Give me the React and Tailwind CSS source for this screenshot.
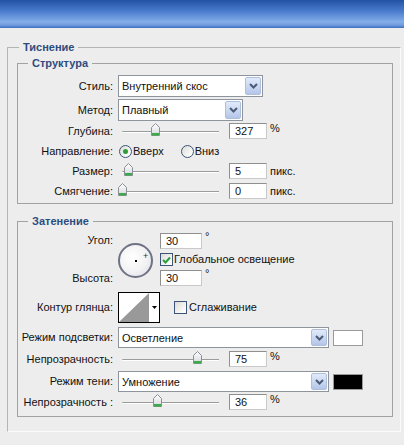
import React from 'react';

const Label = ({ children }) => (
    <span className="w-[95px] shrink-0 text-right whitespace-nowrap">{children}</span>
);

const Chevron = () => (
    <svg width="9" height="6" viewBox="0 0 9 6">
        <polyline points="1,1 4.5,4.5 8,1" fill="none" stroke="#4b5a76" strokeWidth="2" />
    </svg>
);

const Select = ({ value, width }) => (
    <div className={`ml-[5px] flex items-stretch h-full border border-[#8d949c] bg-white ${width}`}>
        <span className="flex-1 flex items-center pl-[3px] pt-[1px]">{value}</span>
        <span className="m-[1px] w-[16px] flex items-center justify-center rounded-[2px] border border-[#aebfdc] bg-[linear-gradient(180deg,#e2eafa_0%,#c6d5f0_60%,#b3c5e8_100%)]">
            <Chevron />
        </span>
    </div>
);

const Thumb = ({ left }) => (
    <svg className="absolute top-0" style={{ left }} width="9" height="13" viewBox="0 0 9 13">
        <defs>
            <linearGradient id="tg" x1="0" y1="0" x2="0" y2="1">
                <stop offset="0" stopColor="#ffffff" />
                <stop offset="1" stopColor="#d4d8dc" />
            </linearGradient>
        </defs>
        <path d="M0.5 4.5 L4.5 0.5 L8.5 4.5 L8.5 12.5 L0.5 12.5 Z" fill="url(#tg)" stroke="#8b9096" />
        <rect x="1" y="10" width="7" height="2.5" fill="#3caa4a" />
    </svg>
);

const Slider = ({ pos }) => (
    <div className="relative ml-[5px] w-[106px] h-[16px] shrink-0">
        <div className="absolute left-[4px] top-[8px] w-[97px] h-[2px] border-t border-[#9b9b9b] bg-white rounded-l-full" />
        <Thumb left={pos} />
    </div>
);

const NumBox = ({ value, width = 'w-[38px]' }) => (
    <div className={`h-[16px] ${width} shrink-0 border border-[#8f8f8f] border-b-[#c9c9c9] border-r-[#c9c9c9] bg-white pl-[5px] flex items-center`}>
        {value}
    </div>
);

const SliderRow = ({ label, pos, value, unit }) => (
    <div className="flex items-center h-[20px]">
        <Label>{label}</Label>
        <Slider pos={pos} />
        <span className="ml-[5px]"><NumBox value={value} /></span>
        <span className={`ml-[3px] ${unit === '%' ? '-mt-[5px]' : ''}`}>{unit}</span>
    </div>
);

const Radio = ({ checked }) => (
    <span className="w-[13px] h-[13px] rounded-full border border-[#3c5478] bg-[linear-gradient(135deg,#dcdcd6_0%,#ffffff_90%)] flex items-center justify-center shrink-0">
        {checked && <span className="w-[5px] h-[5px] rounded-full bg-[#2e9e3c]" />}
    </span>
);

const Checkbox = ({ checked }) => (
    <span className="w-[13px] h-[13px] border border-[#3c5478] bg-[linear-gradient(135deg,#dcdcd6_0%,#ffffff_90%)] flex items-center justify-center shrink-0">
        {checked && (
            <svg width="9" height="8" viewBox="0 0 9 8">
                <polyline points="1,4 3.5,6.5 8,1.5" fill="none" stroke="#27a13a" strokeWidth="2" />
            </svg>
        )}
    </span>
);

const Group = ({ title, className, children }) => (
    <fieldset className={`border border-[#a2a2a2] ${className}`}>
        <legend className="ml-[10px] px-[4px] font-bold text-[#2d4c7e] leading-[14px]">{title}</legend>
        {children}
    </fieldset>
);

export default function App() {
    const structureSliders = [
        { label: 'Размер:', pos: 6, value: '5', unit: 'пикс.' },
        { label: 'Смягчение:', pos: 0, value: '0', unit: 'пикс.' },
    ];

    return (
        <div className="w-[404px] h-[445px] overflow-hidden bg-[#ededed] text-[11px] leading-[13px] text-[#111] font-['Liberation_Sans',Arial,sans-serif]">
            {/* title bar strip */}
            <div className="h-[28px] bg-[linear-gradient(180deg,#2352a4_0%,#4a7cce_40%,#84ade8_78%,#6f9ade_90%,#3e6dbf_100%)]" />

            <fieldset className="ml-[7px] mr-[3px] mt-[12px] border border-[#b4b4b4] border-r-[#fafafa] border-b-[#fafafa] pl-[9px] pr-[7px] pb-[14px]">
                <legend className="ml-[2px] px-[4px] font-bold text-[#2d4c7e] leading-[14px]">Тиснение</legend>

                {/* Структура */}
                <Group title="Структура" className="mt-[2px] pt-[5px] pb-[2px]">
                    <div className="flex items-center h-[22px]">
                        <Label>Стиль:</Label>
                        <Select value="Внутренний скос" width="w-[145px]" />
                    </div>
                    <div className="flex items-center h-[22px] mt-[2px]">
                        <Label>Метод:</Label>
                        <Select value="Плавный" width="w-[125px]" />
                    </div>
                    <SliderRow label="Глубина:" pos={33} value="327" unit="%" />
                    <div className="flex items-center h-[20px]">
                        <Label>Направление:</Label>
                        <span className="ml-[6px]"><Radio checked /></span>
                        <span className="ml-[1px]">Вверх</span>
                        <span className="ml-[17px]"><Radio /></span>
                        <span className="ml-[1px]">Вниз</span>
                    </div>
                    {structureSliders.map((s) => (
                        <SliderRow key={s.label} {...s} />
                    ))}
                </Group>

                {/* Затенение */}
                <Group title="Затенение" className="mt-[10px] pt-[5px] pb-[4px]">
                    <div className="flex h-[53px]">
                        <div className="w-[95px] shrink-0 flex flex-col justify-between text-right">
                            <span className="h-[16px] leading-[14px]">Угол:</span>
                            <span className="h-[16px] leading-[16px]">Высота:</span>
                        </div>
                        <div className="relative ml-[5px] mt-[10px] w-[35px] h-[35px] rounded-full border-2 border-[#6f7283] bg-[radial-gradient(circle_at_40%_40%,#ffffff_0%,#f2f2f4_55%,#d9dbe3_100%)]">
                            <span className="absolute left-[15px] top-[15px] w-[2px] h-[2px] bg-black" />
                            <span className="absolute left-[23px] top-[7px] text-[9px] leading-[9px] text-[#333]">+</span>
                        </div>
                        <div className="ml-[7px] flex flex-col">
                            <div className="flex">
                                <NumBox value="30" width="w-[42px]" />
                                <span className="ml-[3px] -mt-[3px]">°</span>
                            </div>
                            <div className="flex items-center mt-[4px] h-[13px]">
                                <Checkbox checked />
                                <span className="ml-[1px]">Глобальное освещение</span>
                            </div>
                            <div className="flex mt-[4px]">
                                <NumBox value="30" width="w-[42px]" />
                                <span className="ml-[3px] -mt-[3px]">°</span>
                            </div>
                        </div>
                    </div>

                    <div className="flex items-center mt-[6px] h-[31px]">
                        <Label>Контур глянца:</Label>
                        <div className="ml-[5px] flex h-full w-[42px] border border-black bg-white">
                            <svg width="30" height="29" viewBox="0 0 30 29" className="shrink-0">
                                <polygon points="0,29 30,0 30,29" fill="#999999" />
                            </svg>
                            <span className="flex-1 flex items-center justify-center">
                                <svg width="5" height="3" viewBox="0 0 5 3">
                                    <polygon points="0,0 5,0 2.5,3" fill="#000" />
                                </svg>
                            </span>
                        </div>
                        <span className="ml-[14px]"><Checkbox /></span>
                        <span className="ml-[2px]">Сглаживание</span>
                    </div>

                    <div className="flex items-center h-[21px] mt-[4px]">
                        <Label>Режим подсветки:</Label>
                        <Select value="Осветление" width="w-[211px]" />
                        <span className="ml-[4px] w-[30px] h-[16px] border border-[#9a9a9a] bg-white" />
                    </div>
                    <div className="mt-[1px]">
                        <SliderRow label="Непрозрачность:" pos={75} value="75" unit="%" />
                    </div>
                    <div className="flex items-center h-[21px] mt-[2px]">
                        <Label>Режим тени:</Label>
                        <Select value="Умножение" width="w-[211px]" />
                        <span className="ml-[4px] w-[30px] h-[16px] border border-[#9a9a9a] bg-black" />
                    </div>
                    <SliderRow label="Непрозрачность :" pos={35} value="36" unit="%" />
                </Group>
            </fieldset>
        </div>
    );
}
